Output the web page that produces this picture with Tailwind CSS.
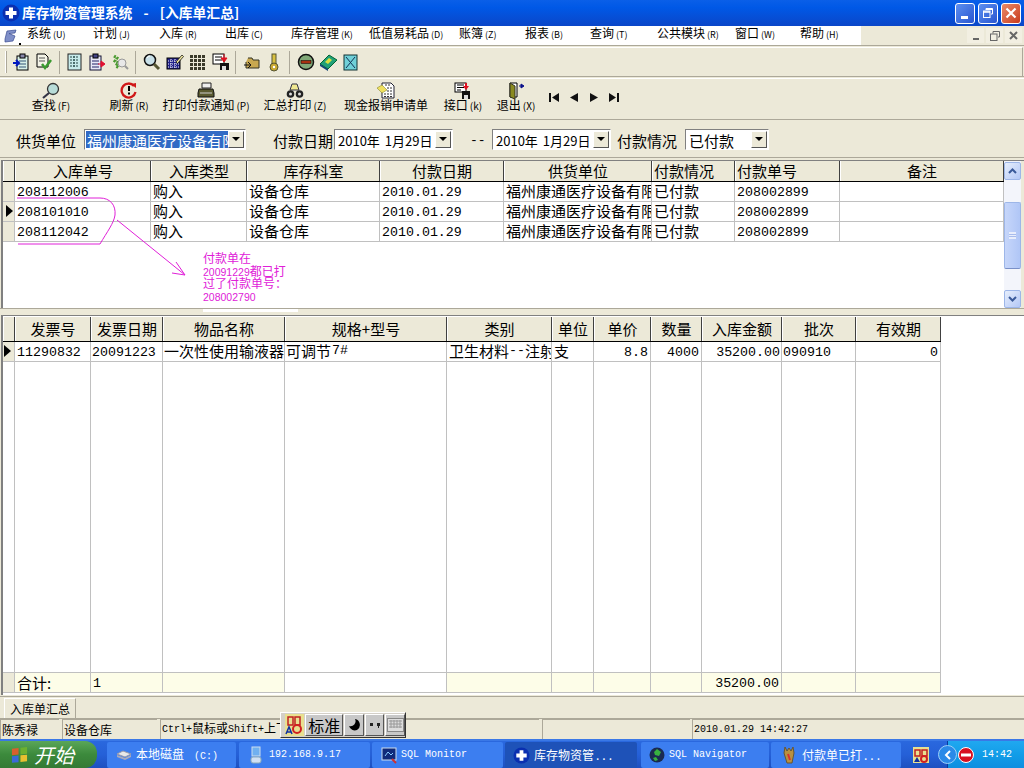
<!DOCTYPE html>
<html lang="zh-CN">
<head>
<meta charset="UTF-8">
<title>库存物资管理系统</title>
<script src="https://cdn.jsdelivr.net/npm/@tailwindcss/browser@4"></script>
</head>
<body class="relative w-[1024px] h-[768px] overflow-hidden flex flex-col bg-[#ece9d8] text-black font-['Noto_Sans_CJK_SC',sans-serif]">

<!-- title bar -->
<div class="h-[26px] shrink-0 flex items-center pl-[2px] pr-[3px] bg-linear-to-b from-[#0a5fe8] via-[#0058e6] via-30% to-[#0a46c8]">
  <svg class="w-[18px] h-[18px] shrink-0" viewBox="0 0 18 18"><circle cx="9" cy="9" r="8.5" fill="#0a2fb0"/><path d="M7 3.5h4V7h3.5v4H11v3.5H7V11H3.5V7H7z" fill="#fff"/></svg>
  <span class="ml-[2px] text-white font-bold text-[13.8px] leading-none whitespace-nowrap">库存物资管理系统 <span class="mx-[8px]">-</span> [入库单汇总]</span>
  <div class="ml-auto flex gap-[3px]">
    <div class="w-[20px] h-[21px] rounded-[3px] border border-white bg-linear-to-br from-[#5d8ff0] to-[#2a55d0] flex items-end pl-[5px] pb-[4px]"><div class="w-[7px] h-[3px] bg-white"></div></div>
    <div class="w-[20px] h-[21px] rounded-[3px] border border-white bg-linear-to-br from-[#5d8ff0] to-[#2a55d0] flex items-center justify-center">
      <svg class="w-[12px] h-[12px]" viewBox="0 0 12 12" fill="none" stroke="#fff"><path d="M4 3V1.5h6.5V7H9"/><rect x="1.5" y="4" width="6.5" height="6.5"/><path d="M1.5 5h6.5M4 2.2h6.5" stroke-width="1.5"/></svg>
    </div>
    <div class="w-[20px] h-[21px] rounded-[3px] border border-white bg-linear-to-br from-[#ea8a68] to-[#c8391a] flex items-center justify-center">
      <svg class="w-[12px] h-[12px]" viewBox="0 0 12 12" stroke="#fff" stroke-width="2.2"><path d="M1.5 1.5l9 9M10.5 1.5l-9 9"/></svg>
    </div>
  </div>
</div>

<!-- menu bar -->
<div class="h-[19px] shrink-0 flex">
  <div class="w-[861px] bg-white flex items-center pb-[5px] text-[12px] leading-none whitespace-nowrap">
    <svg class="w-[27px] h-[18px] shrink-0 -mb-[5px]" viewBox="0 0 27 18"><path d="M5 12l2-8 9-1-1 3-6 .5 6 2.5-2 5-8 1z" fill="#7f8fc8" stroke="#3a4a90" stroke-width=".7"/><rect x="19" y="16" width="2" height="2" fill="#000"/></svg>
    <span class="w-[66px]">系统<span class="text-[9px] ml-[2px]">(U)</span></span>
    <span class="w-[66px]">计划<span class="text-[9px] ml-[2px]">(J)</span></span>
    <span class="w-[66px]">入库<span class="text-[9px] ml-[2px]">(R)</span></span>
    <span class="w-[66px]">出库<span class="text-[9px] ml-[2px]">(C)</span></span>
    <span class="w-[78px]">库存管理<span class="text-[9px] ml-[2px]">(K)</span></span>
    <span class="w-[90px]">低值易耗品<span class="text-[9px] ml-[2px]">(D)</span></span>
    <span class="w-[66px]">账簿<span class="text-[9px] ml-[2px]">(Z)</span></span>
    <span class="w-[65px]">报表<span class="text-[9px] ml-[2px]">(B)</span></span>
    <span class="w-[67px]">查询<span class="text-[9px] ml-[2px]">(T)</span></span>
    <span class="w-[78px]">公共模块<span class="text-[9px] ml-[2px]">(R)</span></span>
    <span class="w-[65px]">窗口<span class="text-[9px] ml-[2px]">(W)</span></span>
    <span>帮助<span class="text-[9px] ml-[2px]">(H)</span></span>
  </div>
  <div class="flex-1 flex items-center justify-end pr-[2px] gap-[2px]">
    <div class="w-[17px] h-[15px] bg-[#f2efe2] flex items-end justify-center pb-[3px]"><div class="w-[6px] h-[2px] bg-[#666]"></div></div>
    <div class="w-[17px] h-[15px] bg-[#f2efe2] flex items-center justify-center"><svg class="w-[10px] h-[10px]" viewBox="0 0 10 10" fill="none" stroke="#666"><path d="M3 2.5V.5h6.5V6H8"/><rect x=".5" y="3" width="6.5" height="6.5"/></svg></div>
    <div class="w-[17px] h-[15px] bg-[#f2efe2] flex items-center justify-center"><svg class="w-[9px] h-[9px]" viewBox="0 0 9 9" stroke="#666" stroke-width="2"><path d="M1 1l7 7M8 1l-7 7"/></svg></div>
  </div>
</div>
<div class="h-[2px] shrink-0 border-t border-[#aca899] border-b-white"></div>

<!-- icon toolbar -->
<div class="h-[29px] shrink-0 flex items-center pl-[5px] mr-[1px] border-t border-white border-r border-r-[#aca899] *:shrink-0">
  <div class="w-[2px] h-[22px] border-l border-white border-r border-r-[#aca899] mr-[2px]"></div>
  <div class="w-[23px] flex justify-center"><svg class="w-[18px] h-[18px]" viewBox="0 0 18 18"><rect x="5" y="3" width="11" height="14" fill="#d8f0e8" stroke="#000"/><rect x="8" y="1" width="5" height="4" fill="#88a" stroke="#000"/><path d="M7 8h7M7 11h7M7 14h7" stroke="#357"/><path d="M1 10h5M4 7l3 3-3 3" stroke="#0018c0" stroke-width="2" fill="none"/></svg></div>
  <div class="w-[24px] flex justify-center"><svg class="w-[18px] h-[18px]" viewBox="0 0 18 18"><path d="M2 1h8l3 3v10H2z" fill="#f4f4e8" stroke="#000"/><path d="M4 5h6M4 8h6" stroke="#555"/><path d="M7 11l3 4 6-8" stroke="#3a9a30" stroke-width="2.5" fill="none"/></svg></div>
  <div class="w-px h-[23px] bg-[#aca899] ml-[3px] mr-[3px]"></div>
  <div class="w-[23px] flex justify-center"><svg class="w-[17px] h-[18px]" viewBox="0 0 17 18"><rect x="2" y="1" width="13" height="16" fill="#c8ecec" stroke="#222"/><path d="M4 4h9M4 7h9M4 10h9M4 13h9M8 3v12" stroke="#244" stroke-dasharray="2 1"/></svg></div>
  <div class="w-[22px] flex justify-center"><svg class="w-[18px] h-[18px]" viewBox="0 0 18 18"><rect x="2" y="3" width="11" height="14" fill="#e8e8f8" stroke="#113"/><rect x="5" y="1" width="5" height="4" fill="#448" stroke="#000"/><path d="M4 8h7M4 11h7M4 14h7" stroke="#226"/><path d="M10 11h5M13 8l4 3-4 3z" stroke="#e01030" fill="#e01030"/></svg></div>
  <div class="w-[24px] flex justify-center"><svg class="w-[18px] h-[18px]" viewBox="0 0 18 18"><path d="M3 3l3 2-2 3 3 2-2 3 3 2" stroke="#4a9a30" stroke-width="3" fill="none" stroke-dasharray="2 1"/><circle cx="11" cy="10" r="4" fill="#e8e8e8" stroke="#999"/><path d="M14 13l3 3" stroke="#999" stroke-width="2"/></svg></div>
  <div class="w-px h-[23px] bg-[#aca899] ml-[3px] mr-[4px]"></div>
  <div class="w-[23px] flex justify-center"><svg class="w-[18px] h-[18px]" viewBox="0 0 18 18"><circle cx="7" cy="7" r="5.5" fill="#c8e0e8" stroke="#111" stroke-width="1.5"/><path d="M4 5a3 3 0 0 1 3-2" stroke="#fff" fill="none"/><path d="M11 11l5 5" stroke="#553" stroke-width="3"/></svg></div>
  <div class="w-[23px] flex justify-center"><svg class="w-[18px] h-[18px]" viewBox="0 0 18 18"><rect x="1" y="5" width="13" height="11" fill="#22228a" stroke="#000"/><path d="M2 8h11M2 11h11M2 14h11M5 6v10M9 6v10" stroke="#fff" stroke-dasharray="1 1"/><path d="M10 9l6-7 1.500 1.500-6 7z" fill="#f0e8a0" stroke="#000" stroke-width=".7"/></svg></div>
  <div class="w-[23px] flex justify-center"><svg class="w-[17px] h-[17px]" viewBox="0 0 17 17" fill="#3a3a2a"><path d="M1 1h3v3H1zM5 1h3v3H5zM9 1h3v3H9zM13 1h3v3h-3zM1 5h3v3H1zM5 5h3v3H5zM9 5h3v3H9zM13 5h3v3h-3zM1 9h3v3H1zM5 9h3v3H5zM9 9h3v3H9zM13 9h3v3h-3zM1 13h3v3H1zM5 13h3v3H5zM9 13h3v3H9zM13 13h3v3h-3z"/></svg></div>
  <div class="w-[23px] flex justify-center"><svg class="w-[18px] h-[18px]" viewBox="0 0 18 18"><rect x="1" y="1" width="11" height="10" fill="#fff" stroke="#000"/><path d="M3 4h7M3 7h7" stroke="#000"/><rect x="8" y="10" width="9" height="7" fill="#111"/><rect x="10" y="13" width="4" height="4" fill="#ddd"/><path d="M12 1v5M9 5h6l-3 4z" fill="#e01020" stroke="#e01020"/></svg></div>
  <div class="w-px h-[23px] bg-[#aca899] ml-[3px] mr-[4px]"></div>
  <div class="w-[23px] flex justify-center"><svg class="w-[18px] h-[18px]" viewBox="0 0 18 18"><path d="M5 5h4l1 2h6v8H3V9" fill="#c8a850" stroke="#332"/><path d="M1 12h6M5 9l3 3-3 3" stroke="#111" fill="none"/></svg></div>
  <div class="w-[22px] flex justify-center"><svg class="w-[14px] h-[19px]" viewBox="0 0 14 19"><rect x="5" y="1" width="4" height="10" fill="#d8c040" stroke="#553"/><circle cx="7" cy="14" r="4" fill="#c8a830" stroke="#553"/><circle cx="7" cy="14" r="1.200" fill="#fff"/></svg></div>
  <div class="w-px h-[23px] bg-[#aca899] ml-[4px] mr-[4px]"></div>
  <div class="w-[23px] flex justify-center"><svg class="w-[18px] h-[18px]" viewBox="0 0 18 18"><circle cx="9" cy="9" r="7.500" fill="#80a878" stroke="#111" stroke-width="1.500"/><rect x="4" y="7.500" width="10" height="3" fill="#a83010" stroke="#000" stroke-width=".5"/></svg></div>
  <div class="w-[23px] flex justify-center"><svg class="w-[19px] h-[18px]" viewBox="0 0 19 18"><path d="M1 11l9-9 8 5-9 9z" fill="#20a078" stroke="#063"/><path d="M1 11l8 5v2l-8-5z" fill="#147"/><path d="M6 9l4-4 3 2-4 4z" fill="#d8e040"/></svg></div>
  <div class="w-[22px] flex justify-center"><svg class="w-[16px] h-[17px]" viewBox="0 0 16 17"><rect x="1" y="1" width="13" height="15" fill="#70d0d8" stroke="#133"/><path d="M3 3l9 11M12 3l-9 11" stroke="#135"/></svg></div>
</div>
<div class="h-[2px] shrink-0 border-t border-[#aca899]"></div>

<!-- button toolbar -->
<div class="h-[41px] shrink-0 flex pl-[12px] border-t border-white text-[12px] leading-none whitespace-nowrap *:shrink-0">
  <div class="w-[78px] flex flex-col items-center pt-[3px]">
    <svg class="w-[20px] h-[17px]" viewBox="0 0 20 17"><circle cx="12" cy="7" r="5.500" fill="#b8dcd8" stroke="#333" stroke-width="1.300"/><path d="M8 11l-6 5" stroke="#334" stroke-width="2.200"/></svg>
    <span>查找<span class="text-[10px] ml-[2px]">(F)</span></span>
  </div>
  <div class="w-[78px] flex flex-col items-center pt-[3px]">
    <svg class="w-[18px] h-[17px]" viewBox="0 0 18 17"><path d="M14 4a7 7 0 1 0 1.500 6" fill="none" stroke="#d01818" stroke-width="2.300"/><path d="M11 2l5-1v5z" fill="#d01818"/><rect x="8" y="4" width="2" height="5" fill="#000"/><rect x="8" y="10.500" width="2" height="2" fill="#000"/></svg>
    <span>刷新<span class="text-[10px] ml-[2px]">(R)</span></span>
  </div>
  <div class="w-[76px] flex flex-col items-center pt-[3px]">
    <svg class="w-[18px] h-[17px]" viewBox="0 0 18 17"><path d="M5 1h9v5H5z" fill="#eee" stroke="#222"/><path d="M2 7h14l1 4v4H1v-4z" fill="#5a5a30" stroke="#111"/><path d="M3 11h12" stroke="#ccc"/></svg>
    <span>打印付款通知<span class="text-[10px] ml-[2px]">(P)</span></span>
  </div>
  <div class="w-[102px] flex flex-col items-center pt-[3px]">
    <svg class="w-[18px] h-[17px]" viewBox="0 0 18 17"><path d="M6 2h5l2 6H4z" fill="#f0e890" stroke="#334"/><circle cx="4.500" cy="12" r="3.800" fill="#222"/><circle cx="13.500" cy="12" r="3.800" fill="#222"/><circle cx="4.500" cy="12" r="1.500" fill="#ddd"/><circle cx="13.500" cy="12" r="1.500" fill="#ddd"/></svg>
    <span>汇总打印<span class="text-[10px] ml-[2px]">(Z)</span></span>
  </div>
  <div class="w-[80px] flex flex-col items-center pt-[3px]">
    <svg class="w-[18px] h-[17px]" viewBox="0 0 18 17"><path d="M5 1h9l3 3v12H5z" fill="#fff" stroke="#223"/><path d="M8 3h5M10 6h6M10 9h6M7 12h9M7 14.500h9" stroke="#333" stroke-dasharray="2 1"/><path d="M0 6l5-3 5 5-5 3z" fill="#f0e060" stroke="#8a8a30" stroke-width=".6"/></svg>
    <span>现金报销申请单</span>
  </div>
  <div class="w-[74px] flex flex-col items-center pt-[3px]">
    <svg class="w-[18px] h-[17px]" viewBox="0 0 18 17"><rect x="1" y="1" width="11" height="9" fill="#fff" stroke="#000"/><path d="M3 3h7M3 5.500h7M3 8h4" stroke="#000"/><rect x="8" y="9" width="8" height="8" fill="#111"/><rect x="10" y="13" width="4" height="4" fill="#ddd"/><path d="M9 4h6l-3 4zM11 1h2v4h-2z" fill="#e01020"/></svg>
    <span>接口<span class="text-[10px] ml-[2px]">(k)</span></span>
  </div>
  <div class="w-[32px] flex flex-col items-center pt-[3px]">
    <svg class="w-[18px] h-[17px]" viewBox="0 0 18 17"><path d="M3 1h7v14H3z" fill="#fff" stroke="#000"/><path d="M3 1l5 3v13l-5-2z" fill="#8a8a20" stroke="#332"/><path d="M12 4h3M14 2l3 2-3 2z" fill="#0a108a" stroke="#0a108a"/></svg>
    <span>退出<span class="text-[10px] ml-[2px]">(X)</span></span>
  </div>
  <div class="flex items-start gap-[10px] pt-[14px] ml-[17px]">
    <svg class="w-[10px] h-[9px]" viewBox="0 0 10 9" fill="#111"><path d="M0 0h2v9H0zM10 0v9L3 4.500z"/></svg>
    <svg class="w-[10px] h-[9px]" viewBox="0 0 10 9" fill="#111"><path d="M9 0v9L1 4.500z"/></svg>
    <svg class="w-[10px] h-[9px]" viewBox="0 0 10 9" fill="#111"><path d="M1 0v9l8-4.500z"/></svg>
    <svg class="w-[10px] h-[9px]" viewBox="0 0 10 9" fill="#111"><path d="M8 0h2v9H8zM0 0v9l7-4.500z"/></svg>
  </div>
</div>
<div class="h-[2px] shrink-0 border-t border-[#aca899]"></div>

<!-- filter row -->
<div class="h-[36px] shrink-0 flex items-center pl-[16px] whitespace-nowrap leading-none text-[15px]">
  <span class="w-[68px] shrink-0 pt-[2px]">供货单位</span>
  <div class="w-[162px] h-[21px] shrink-0 flex items-center border border-[#808080] border-b-white border-r-white bg-white p-px">
    <span class="flex-1 h-full bg-[#316ac5] text-white overflow-hidden flex items-center pl-px pt-[2px]">福州康通医疗设备有限</span>
    <div class="w-[16px] h-full bg-[#ece9d8] border border-white border-b-[#555] border-r-[#555] flex items-center justify-center"><div class="border-x-[4px] border-x-transparent border-t-[4px] border-t-black"></div></div>
  </div>
  <span class="w-[61px] shrink-0 ml-[27px] pt-[2px]">付款日期</span>
  <div class="w-[119px] h-[21px] shrink-0 flex items-center border border-[#808080] border-b-white border-r-white bg-white p-px text-[13px]">
    <span class="flex-1 pl-[2px] pt-[2px]">2010年 <span class="ml-[2px]">1月29日</span></span>
    <div class="w-[16px] h-full bg-[#ece9d8] border border-white border-b-[#555] border-r-[#555] flex items-center justify-center"><div class="border-x-[4px] border-x-transparent border-t-[4px] border-t-black"></div></div>
  </div>
  <span class="w-[22px] ml-[17px] shrink-0 font-['Liberation_Mono',monospace] text-[13px] pt-[2px]">--</span>
  <div class="w-[119px] h-[21px] shrink-0 flex items-center border border-[#808080] border-b-white border-r-white bg-white p-px text-[13px]">
    <span class="flex-1 pl-[2px] pt-[2px]">2010年 <span class="ml-[2px]">1月29日</span></span>
    <div class="w-[16px] h-full bg-[#ece9d8] border border-white border-b-[#555] border-r-[#555] flex items-center justify-center"><div class="border-x-[4px] border-x-transparent border-t-[4px] border-t-black"></div></div>
  </div>
  <span class="w-[68px] ml-[6px] shrink-0 pt-[2px]">付款情况</span>
  <div class="w-[84px] h-[21px] shrink-0 flex items-center border border-[#808080] border-b-white border-r-white bg-white p-px">
    <span class="flex-1 pl-[2px] pt-[2px]">已付款</span>
    <div class="w-[16px] h-full bg-[#ece9d8] border border-white border-b-[#555] border-r-[#555] flex items-center justify-center"><div class="border-x-[4px] border-x-transparent border-t-[4px] border-t-black"></div></div>
  </div>
</div>
<div class="h-[3px] shrink-0 border-t border-[#aca899]"></div>

<!-- master grid -->
<div class="h-[148px] shrink-0 ml-px flex border-l-2 border-t border-[#808080] text-[15px] leading-none whitespace-nowrap">
  <div class="w-[1001px] h-full bg-white flex flex-col">
    <div class="h-[21px] shrink-0 grid grid-cols-[12px_136px_96px_133px_124px_148px_83px_105px_164px] bg-[#ece9d8] border-b border-black *:flex *:items-center *:justify-center *:pb-[2px] *:border-r *:border-[#404040] *:border-l *:border-l-white *:overflow-hidden">
      <div></div><div>入库单号</div><div>入库类型</div><div>库存科室</div><div>付款日期</div><div>供货单位</div><div class="!justify-start pl-px">付款情况</div><div class="!justify-start pl-px">付款单号</div><div>备注</div>
    </div>
    <div class="h-[20px] shrink-0 grid grid-cols-[12px_136px_96px_133px_124px_148px_83px_105px_164px] border-b border-[#c0c0c0] *:flex *:items-center *:pb-[2px] *:border-r *:border-[#c0c0c0] *:pl-[2px] *:overflow-hidden">
      <div class="bg-[#ece9d8] border-[#404040]"></div><div class="!pb-0 pt-[2px] font-['Liberation_Mono',monospace] text-[13.300px]">208112006</div><div>购入</div><div>设备仓库</div><div class="!pb-0 pt-[2px] font-['Liberation_Mono',monospace] text-[13.300px]">2010.01.29</div><div>福州康通医疗设备有限</div><div>已付款</div><div class="!pb-0 pt-[2px] font-['Liberation_Mono',monospace] text-[13.300px]">208002899</div><div></div>
    </div>
    <div class="h-[20px] shrink-0 grid grid-cols-[12px_136px_96px_133px_124px_148px_83px_105px_164px] border-b border-[#c0c0c0] *:flex *:items-center *:pb-[2px] *:border-r *:border-[#c0c0c0] *:pl-[2px] *:overflow-hidden">
      <div class="bg-[#ece9d8] border-[#404040]"><svg class="w-[7px] h-[12px] shrink-0 ml-px" viewBox="0 0 7 12"><path d="M0 0l7 6-7 6z" fill="#000"/></svg></div><div class="!pb-0 pt-[2px] font-['Liberation_Mono',monospace] text-[13.300px]">208101010</div><div>购入</div><div>设备仓库</div><div class="!pb-0 pt-[2px] font-['Liberation_Mono',monospace] text-[13.300px]">2010.01.29</div><div>福州康通医疗设备有限</div><div>已付款</div><div class="!pb-0 pt-[2px] font-['Liberation_Mono',monospace] text-[13.300px]">208002899</div><div></div>
    </div>
    <div class="h-[20px] shrink-0 grid grid-cols-[12px_136px_96px_133px_124px_148px_83px_105px_164px] border-b border-[#c0c0c0] *:flex *:items-center *:pb-[2px] *:border-r *:border-[#c0c0c0] *:pl-[2px] *:overflow-hidden">
      <div class="bg-[#ece9d8] border-[#404040]"></div><div class="!pb-0 pt-[2px] font-['Liberation_Mono',monospace] text-[13.300px]">208112042</div><div>购入</div><div>设备仓库</div><div class="!pb-0 pt-[2px] font-['Liberation_Mono',monospace] text-[13.300px]">2010.01.29</div><div>福州康通医疗设备有限</div><div>已付款</div><div class="!pb-0 pt-[2px] font-['Liberation_Mono',monospace] text-[13.300px]">208002899</div><div></div>
    </div>
  </div>
  <!-- scrollbar -->
  <div class="w-[17px] h-full shrink-0 bg-[#f3f5fb] flex flex-col">
    <div class="h-[18px] mt-px rounded-[2px] bg-linear-to-br from-[#e6eefc] to-[#b4c8f6] border border-[#9db6e8] flex items-center justify-center"><svg class="w-[9px] h-[6px]" viewBox="0 0 9 6" fill="none" stroke="#3a5a9a" stroke-width="2"><path d="M1 5l3.500-3.500L8 5"/></svg></div>
    <div class="h-[67px] mt-[22px] rounded-[2px] bg-linear-to-r from-[#c6d6fa] to-[#b0c6f6] border border-[#9db6e8] border-b-[#7a90c8] flex items-center justify-center"><div class="w-[7px] h-[7px] border-y border-[#e8eefc] bg-[repeating-linear-gradient(#e8eefc_0_1px,#a8bcec_1px_2px)]"></div></div>
    <div class="h-[18px] mt-auto rounded-[2px] bg-linear-to-br from-[#e6eefc] to-[#b4c8f6] border border-[#9db6e8] flex items-center justify-center"><svg class="w-[9px] h-[6px]" viewBox="0 0 9 6" fill="none" stroke="#3a5a9a" stroke-width="2"><path d="M1 1l3.500 3.500L8 1"/></svg></div>
  </div>
</div>

<!-- splitter -->
<div class="h-[7px] shrink-0 flex border-t border-[#aca899]">
  <div class="w-[203px]"></div><div class="w-[95px] h-[3px] bg-white"></div>
</div>

<!-- detail grid -->
<div class="h-[380px] shrink-0 ml-px flex flex-col bg-white border-l-2 border-t border-[#808080] text-[15px] leading-none whitespace-nowrap">
  <div class="h-[26px] shrink-0 grid grid-cols-[12px_76px_72px_122px_162px_105px_42px_57px_51px_80px_74px_85px] w-[938px] pt-px border-b border-black *:bg-[#ece9d8] *:flex *:items-center *:justify-center *:pb-[2px] *:border-r *:border-[#404040] *:border-l *:border-l-white *:overflow-hidden">
    <div></div><div>发票号</div><div>发票日期</div><div>物品名称</div><div>规格+型号</div><div>类别</div><div>单位</div><div>单价</div><div>数量</div><div>入库金额</div><div>批次</div><div>有效期</div>
  </div>
  <div class="h-[20px] shrink-0 grid grid-cols-[12px_76px_72px_122px_162px_105px_42px_57px_51px_80px_74px_85px] w-[938px] border-b border-[#c0c0c0] *:flex *:items-center *:pb-[2px] *:border-r *:border-[#c0c0c0] *:px-[2px] *:overflow-hidden">
    <div class="bg-[#ece9d8] border-[#404040] !px-0"><svg class="w-[7px] h-[12px] shrink-0 ml-px" viewBox="0 0 7 12"><path d="M0 0l7 6-7 6z" fill="#000"/></svg></div>
    <div class="!pb-0 pt-[2px] font-['Liberation_Mono',monospace] text-[13.300px]">11290832</div>
    <div class="!pb-0 pt-[2px] !px-px font-['Liberation_Mono',monospace] text-[13.300px]">20091223</div>
    <div class="!px-px">一次性使用输液器</div>
    <div class="!px-px">可调节<span class="ml-px font-['Liberation_Mono',monospace] text-[13.300px]">7#</span></div>
    <div>卫生材料<span class="font-['Liberation_Mono',monospace] text-[13.300px]">--</span>注射</div>
    <div>支</div>
    <div class="justify-end !pb-0 pt-[2px] font-['Liberation_Mono',monospace] text-[13.300px]">8.8</div>
    <div class="justify-end !pb-0 pt-[2px] font-['Liberation_Mono',monospace] text-[13.300px]">4000</div>
    <div class="justify-end !pb-0 pt-[2px] !px-px font-['Liberation_Mono',monospace] text-[13.300px]">35200.00</div>
    <div class="!pb-0 pt-[2px] !px-px font-['Liberation_Mono',monospace] text-[13.300px]">090910</div>
    <div class="justify-end !pb-0 pt-[2px] font-['Liberation_Mono',monospace] text-[13.300px]">0</div>
  </div>
  <div class="flex-1 grid grid-cols-[12px_76px_72px_122px_162px_105px_42px_57px_51px_80px_74px_85px] w-[938px] *:border-r *:border-[#c0c0c0]">
    <div class="border-[#404040]"></div><div></div><div></div><div></div><div></div><div></div><div></div><div></div><div></div><div></div><div></div><div></div>
  </div>
  <div class="h-[21px] shrink-0 grid grid-cols-[12px_76px_72px_122px_162px_105px_42px_57px_51px_80px_74px_85px] w-[938px] border-y border-[#c0c0c0] *:bg-[#fdfde8] *:flex *:items-center *:border-r *:border-[#c0c0c0] *:px-[2px]">
    <div class="!bg-[#ece9d8] border-[#404040]"></div>
    <div>合计:</div>
    <div class="pt-[2px] font-['Liberation_Mono',monospace] text-[13.300px]">1</div>
    <div></div><div class="!bg-white"></div><div></div><div></div><div></div><div></div>
    <div class="justify-end pt-[2px] font-['Liberation_Mono',monospace] text-[13.300px]">35200.00</div>
    <div></div><div></div>
  </div>
  <div class="h-[2px] shrink-0 bg-white"></div>
</div>

<!-- tabs -->
<div class="h-[22px] shrink-0 mt-px pt-px flex border-t border-[#aca899] text-[12px] leading-none">
  <div class="ml-[4px] w-[72px] h-[20px] flex items-center justify-center border border-[#aca899] border-b-0 border-t-white border-l-white">入库单汇总</div>
</div>

<!-- status bar -->
<div class="h-[21px] shrink-0 flex border-t border-[#aca899] text-[12px] leading-none whitespace-nowrap *:flex *:items-center *:border-l *:border-t *:border-[#aca899] *:overflow-hidden *:pl-px">
  <div class="w-[59px]">陈秀禄</div>
  <div class="w-[95px] ml-[3px]">设备仓库</div>
  <div class="w-[379px] ml-[3px] font-['Liberation_Mono','Noto_Sans_CJK_SC',monospace] text-[10px]">Ctrl+<span class="text-[12px]">鼠标或</span>Shift+<span class="text-[12px]">上下键</span></div>
  <div class="w-[148px] ml-[3px]"></div>
  <div class="flex-1 ml-[2px] font-['Liberation_Mono',monospace] text-[10px]">2010.01.29 14:42:27</div>
</div>

<!-- taskbar -->
<div class="h-[29px] shrink-0 flex border-t-2 border-[#3a78e6] bg-linear-to-b from-[#2a68de] via-[#2560d8] to-[#1e50c0] text-white leading-none whitespace-nowrap text-[12px]">
  <div class="w-[97px] h-full shrink-0 rounded-r-[12px] bg-linear-to-b from-[#5aa658] via-[#3c8a3c] to-[#357a35] flex items-center pl-[11px] gap-[6px] text-[20px] italic">
    <svg class="w-[17px] h-[17px] shrink-0 -skew-y-6" viewBox="0 0 18 18"><path d="M1 2h7v7H1z" fill="#d8602e"/><path d="M10 2h7v7h-7z" fill="#6cb030"/><path d="M1 10h7v7H1z" fill="#3a6ad8"/><path d="M10 10h7v7h-7z" fill="#e8c030"/></svg>
    <span>开始</span>
  </div>
  <div class="w-[129px] h-[26px] shrink-0 ml-[10px] mt-[1px] rounded-[2px] bg-[#3c7ef0] flex items-center pl-[9px] gap-[4px]">
    <svg class="w-[16px] h-[14px] shrink-0" viewBox="0 0 16 14"><path d="M1 6l6-3 8 3-6 3z" fill="#e8e8e8" stroke="#99a"/><path d="M1 7v2l8 3 6-3V7l-6 3z" fill="#aab"/></svg>
    <span>本地磁盘<span class="ml-[10px] font-['Liberation_Mono',monospace] text-[10px]">(C:)</span></span>
  </div>
  <div class="w-[131px] h-[26px] shrink-0 ml-[3px] mt-[1px] rounded-[2px] bg-[#3c7ef0] flex items-center pl-[10px] gap-[6px]">
    <svg class="w-[14px] h-[18px] shrink-0" viewBox="0 0 14 18"><rect x="3" y="1" width="8" height="9" fill="#70b0f0" stroke="#cde"/><rect x="2" y="11" width="10" height="6" rx="2" fill="#d0e0f4" stroke="#8ab"/></svg>
    <span class="font-['Liberation_Mono',monospace] text-[10px]">192.168.9.17</span>
  </div>
  <div class="w-[131px] h-[26px] shrink-0 ml-[2px] mt-[1px] rounded-[2px] bg-[#3c7ef0] flex items-center pl-[9px] gap-[3px]">
    <svg class="w-[17px] h-[17px] shrink-0" viewBox="0 0 17 17"><rect x="1" y="1" width="14" height="12" fill="#102a7a" stroke="#cde"/><path d="M4 9l3-4 3 3 2-2" stroke="#8cf" fill="none"/><path d="M11 12l4 4" stroke="#d03030" stroke-width="2"/></svg>
    <span class="font-['Liberation_Mono',monospace] text-[10px]">SQL Monitor</span>
  </div>
  <div class="w-[132px] h-[26px] shrink-0 ml-[2px] mt-[1px] rounded-[2px] bg-[#1e52b8] flex items-center pl-[8px] gap-[4px]">
    <svg class="w-[17px] h-[17px] shrink-0" viewBox="0 0 18 18"><circle cx="9" cy="9" r="8.500" fill="#0a2fb0"/><path d="M7 3.500h4V7h3.500v4H11v3.500H7V11H3.500V7H7z" fill="#fff"/></svg>
    <span>库存物资管<span class="ml-[2px] tracking-[3px]">...</span></span>
  </div>
  <div class="w-[128px] h-[26px] shrink-0 ml-[4px] mt-[1px] rounded-[2px] bg-[#3c7ef0] flex items-center pl-[8px] gap-[4px]">
    <svg class="w-[16px] h-[16px] shrink-0" viewBox="0 0 16 16"><circle cx="8" cy="8" r="7.500" fill="#1a2a50"/><path d="M8 2l4 3-2 4-4-1-1-3zM4 11l3-1 2 3-3 1z" fill="#38b040"/></svg>
    <span class="font-['Liberation_Mono',monospace] text-[10px]">SQL Navigator</span>
  </div>
  <div class="w-[130px] h-[26px] shrink-0 ml-[2px] mt-[1px] rounded-[2px] bg-[#3c7ef0] flex items-center pl-[11px] gap-[6px]">
    <svg class="w-[14px] h-[18px] shrink-0" viewBox="0 0 14 18"><path d="M3 1l2 4 2-3 2 3 2-4 1 6-2 10H5L2 7z" fill="#b89040" stroke="#653"/><path d="M6 8l2 6" stroke="#d83030" stroke-width="2"/></svg>
    <span>付款单已打<span class="ml-[2px] tracking-[3px]">...</span></span>
  </div>
  <div class="w-[28px] shrink-0 flex items-center justify-end">
    <svg class="w-[16px] h-[16px] shrink-0" viewBox="0 0 16 16"><rect width="16" height="16" fill="#e8e090"/><path d="M2 3h5v6H2zM9 3h5v6H9z" fill="none" stroke="#c02020" stroke-width="1.500"/><path d="M1 15l3-5 3 5z" fill="#1030a0"/><circle cx="11" cy="12" r="3" fill="none" stroke="#d02020" stroke-width="2"/></svg>
  </div>
  <div class="w-[18px] shrink-0 flex items-center justify-end translate-x-[10px] z-10">
    <div class="w-[19px] h-[19px] shrink-0 rounded-full bg-[#2a8ae8] border border-[#9cd0f8] flex items-center justify-center"><svg class="w-[8px] h-[10px]" viewBox="0 0 8 10" fill="none" stroke="#fff" stroke-width="2"><path d="M6 1L2 5l4 4"/></svg></div>
  </div>
  <div class="flex-1 flex items-center pl-[10px] bg-linear-to-b from-[#20a8f0] via-[#119de8] to-[#0f8ee0] border-l border-[#0a3a9a]">
    <svg class="w-[16px] h-[16px] shrink-0" viewBox="0 0 16 16"><circle cx="8" cy="8" r="7.500" fill="#d81020" stroke="#fff"/><rect x="3" y="6.500" width="10" height="3" fill="#fff"/></svg>
    <span class="ml-[8px] font-['Liberation_Mono',monospace] text-[10px]">14:42</span>
  </div>
</div>

<!-- hand-drawn note on the screenshot -->
<svg class="absolute left-0 top-0 w-[1024px] h-[768px] pointer-events-none" viewBox="0 0 1024 768" fill="none" stroke="#e020d8">
  <path d="M17 198H100C110 198 116 205 115 215C114 223 107 232 100 244H18"/>
  <path d="M117 220L185 275M172 273L185 275L176 262"/>
</svg>
<div class="absolute left-[203px] top-[253px] text-[#e020d8] text-[12px] leading-[12.500px] font-['Liberation_Sans','Noto_Sans_CJK_SC',sans-serif] whitespace-nowrap">付款单在<br><span class="text-[10.500px]">20091229</span>都已打<br>过了付款单号：<br><span class="text-[10.500px]">208002790</span></div>

<!-- IME toolbar -->
<div class="absolute left-[280px] top-[712px] w-[126px] h-[26px] bg-[#d4d0c8] border border-white border-b-[#333] border-r-[#333] flex items-center pl-[4px] gap-px">
  <div class="w-[19px] h-[22px] bg-[#e8e090] flex items-center justify-center"><svg class="w-[18px] h-[20px]" viewBox="0 0 18 20"><path d="M3 2h5v8H3zM10 2h5v8h-5z" fill="none" stroke="#c02020" stroke-width="1.500"/><path d="M1 19l3-7 3 7M2 17h4" stroke="#1030a0" stroke-width="1.500" fill="none"/><circle cx="12" cy="14" r="4" fill="none" stroke="#d02020" stroke-width="2"/></svg></div>
  <div class="w-[39px] h-[22px] bg-[#c8c8c8] border border-white border-b-[#555] border-r-[#555] flex items-center justify-center text-[16px] leading-none">标准</div>
  <div class="w-[20px] h-[22px] bg-[#c8c8c8] border border-white border-b-[#555] border-r-[#555] flex items-center justify-center"><svg class="w-[14px] h-[14px]" viewBox="0 0 14 14"><path d="M8 1a6 6 0 0 1 2 11A6 6 0 0 1 2 8a5 5 0 0 0 6-7z" fill="#000"/></svg></div>
  <div class="w-[19px] h-[22px] bg-[#c8c8c8] border border-white border-b-[#555] border-r-[#555] flex items-center justify-center"><svg class="w-[12px] h-[8px]" viewBox="0 0 12 8" fill="#222"><rect x="1" y="2" width="3" height="3"/><rect x="8" y="2" width="3" height="3"/><rect x="9" y="5" width="1" height="2"/></svg></div>
  <div class="w-[20px] h-[22px] bg-[#c8c8c8] border border-white border-b-[#555] border-r-[#555] flex items-center justify-center"><svg class="w-[17px] h-[14px]" viewBox="0 0 17 14"><rect x=".5" y=".5" width="16" height="13" fill="#ddd" stroke="#888"/><path d="M2 3h13M2 6h13M2 9h13M4 2v8M7 2v8M10 2v8M13 2v8" stroke="#999"/></svg></div>
</div>

</body>
</html>
